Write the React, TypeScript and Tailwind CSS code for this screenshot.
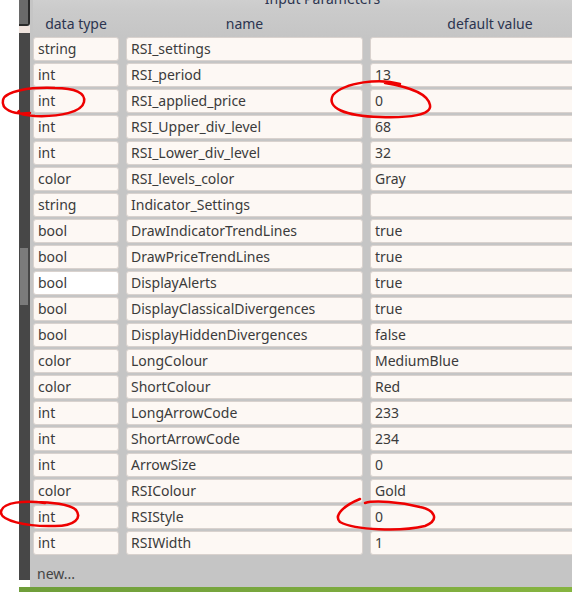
const rows: [string, string, string][] = [
  ["string", "RSI_settings", ""],
  ["int", "RSI_period", "13"],
  ["int", "RSI_applied_price", "0"],
  ["int", "RSI_Upper_div_level", "68"],
  ["int", "RSI_Lower_div_level", "32"],
  ["color", "RSI_levels_color", "Gray"],
  ["string", "Indicator_Settings", ""],
  ["bool", "DrawIndicatorTrendLines", "true"],
  ["bool", "DrawPriceTrendLines", "true"],
  ["bool", "DisplayAlerts", "true"],
  ["bool", "DisplayClassicalDivergences", "true"],
  ["bool", "DisplayHiddenDivergences", "false"],
  ["color", "LongColour", "MediumBlue"],
  ["color", "ShortColour", "Red"],
  ["int", "LongArrowCode", "233"],
  ["int", "ShortArrowCode", "234"],
  ["int", "ArrowSize", "0"],
  ["color", "RSIColour", "Gold"],
  ["int", "RSIStyle", "0"],
  ["int", "RSIWidth", "1"],
]

function Cell({ text, width, focused }: { text: string; width: string; focused?: boolean }) {
  return (
    <div
      className={`${width} h-[24px] shrink-0 rounded-[3px] border border-[#d9d2ce] px-[4px] flex items-center text-[14px] text-[#3b3b3b] leading-none ${
        focused ? "bg-white" : "bg-[#fdf8f4]"
      }`}
    >
      {text}
    </div>
  )
}

export default function App() {
  return (
    <div
      className="relative w-[572px] h-[592px] bg-white overflow-hidden flex flex-col"
      style={{ fontFamily: '"Noto Sans", "Open Sans", sans-serif' }}
    >
      <div className="flex h-[587px]">
        <div className="w-[19px] shrink-0 bg-white" />
        {/* side strip */}
        <div className="w-[11px] shrink-0 flex flex-col h-[580px]">
          <div className="h-[26px] bg-[#6a6a6a] border-r-2 border-b-2 border-[#2a2a2a] rounded-br-[3px]" />
          <div className="h-[7px] bg-[#efe3dd]" />
          <div className="flex-1 bg-[#474747] flex flex-col">
            <div className="h-[215px]" />
            <div className="h-[57px] w-[8px] ml-[1px] bg-[#7b7b7b]" />
          </div>
        </div>
        {/* panel */}
        <div className="flex-1 bg-[#c5c5c5] flex flex-col pl-[3px] overflow-hidden">
          <div className="h-[9px] overflow-hidden bg-gradient-to-b from-[#cfcfcf] to-[#cbcbcb]">
            <div className="-mt-[10px] text-center text-[14px] text-[#2c3550] leading-[18px] pl-[40px]">
              Input Parameters
            </div>
          </div>
          <div className="h-[28px] flex items-center text-[14px] text-[#2c3550] bg-gradient-to-b from-[#cbcbcb] to-[#c5c5c5]">
            <div className="w-[86px] shrink-0 text-center">data type</div>
            <div className="w-[7px] shrink-0" />
            <div className="w-[237px] shrink-0 text-center">name</div>
            <div className="w-[7px] shrink-0" />
            <div className="w-[240px] shrink-0 text-center">default value</div>
          </div>
          <div className="flex flex-col gap-[2px]">
            {rows.map(([t, n, v], i) => (
              <div key={i} className="flex gap-[7px]">
                <Cell text={t} width="w-[86px]" focused={n === "DisplayAlerts"} />
                <Cell text={n} width="w-[237px]" />
                <Cell text={v} width="w-[240px]" />
              </div>
            ))}
          </div>
          <div className="pl-[4px] pt-[8px] text-[14px] text-[#444]">new...</div>
        </div>
      </div>
      <div className="flex h-[5px]">
        <div className="w-[19px] shrink-0 bg-white" />
        <div className="flex-1 bg-gradient-to-r from-[#6f9e3a] via-[#7aa83e] to-[#86b440]" />
      </div>

      {/* red annotations */}
      <svg className="absolute inset-0 pointer-events-none" width="572" height="592" viewBox="0 0 572 592" fill="none">
        <g stroke="#ee0000" strokeWidth="2.5" strokeLinecap="round" strokeLinejoin="round">
          <path d="M30 113 C12 115 1 109 3 100 C5 91 30 87 55 88 C75 88 86 93 84 102 C82 112 60 117 35 116 C22 115 16 113 19 111" />
          <path d="M400 84 C380 78 345 82 333 95 C326 108 345 116 380 117 C410 118 432 115 430 105 C428 95 415 88 385 83" />
          <path d="M45 503 C25 500 2 502 1 512 C0 520 25 527 55 526 C75 526 82 518 76 510 C70 504 50 502 35 502" />
          <path d="M360 499 C345 505 333 515 340 522 C355 530 400 532 425 526 C440 520 435 510 420 507 C400 502 375 500 365 503" />
        </g>
      </svg>
    </div>
  )
}
